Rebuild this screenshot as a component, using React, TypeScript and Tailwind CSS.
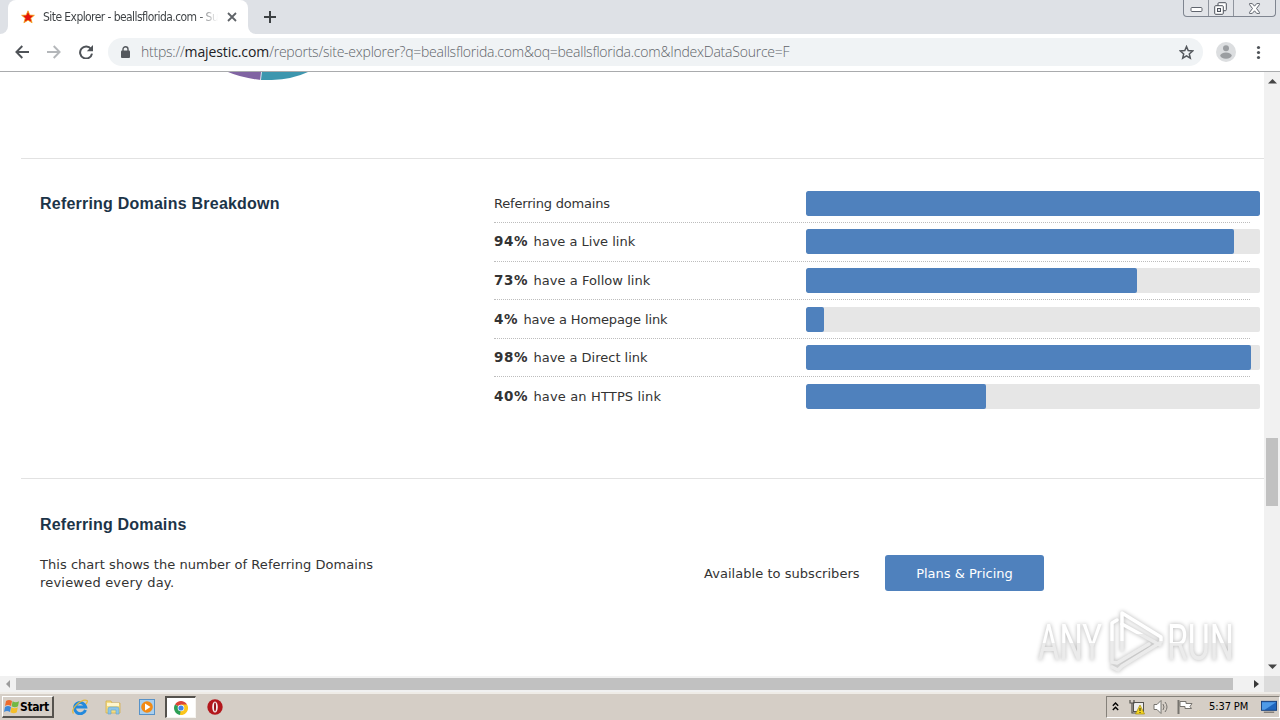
import React from "react";

interface DomainRow {
  percent?: string;
  label: string;
  fill: number;
  tracking?: string;
}

const rows: DomainRow[] = [
  { label: "Referring domains", fill: 454, tracking: "tracking-[-0.2px]" },
  { percent: "94%", label: "have a Live link", fill: 428 },
  { percent: "73%", label: "have a Follow link", fill: 331, tracking: "tracking-[0.05px]" },
  { percent: "4%", label: "have a Homepage link", fill: 18, tracking: "tracking-[-0.1px]" },
  { percent: "98%", label: "have a Direct link", fill: 445 },
  { percent: "40%", label: "have an HTTPS link", fill: 180, tracking: "tracking-[0.15px]" },
];

function TabStrip() {
  return (
    <div className="flex h-[34px] bg-[#dee1e6]">
      <div className="h-2 w-2 self-end bg-white">
        <div className="h-full w-full rounded-br-lg bg-[#dee1e6]" />
      </div>
      <div className="flex h-full w-[240px] items-center rounded-t-lg bg-white pl-[13px]">
        <svg className="h-[14px] w-[14px] shrink-0" viewBox="0 0 14 14">
          <path d="M7 .8l1.800 4.300 4.600.2-3.600 2.900 1.300 4.600L7 10.200l-4.100 2.600 1.300-4.600L.6 5.300l4.600-.2z" fill="#e5140c" stroke="#f4a81c" strokeWidth=".8" />
        </svg>
        <span className="ml-[8px] w-[175px] whitespace-nowrap bg-gradient-to-r from-[#3c4043] from-[88%] to-transparent bg-clip-text font-['DejaVu_Sans_Condensed','DejaVu_Sans',sans-serif] text-[12px] leading-[18px] tracking-[-0.57px] text-transparent">
          Site Explorer - beallsflorida.com - Su
        </span>
        <svg className="ml-[9px] h-[10px] w-[10px]" viewBox="0 0 10 10">
          <path d="M1 1l8 8M9 1L1 9" stroke="#5f6368" strokeWidth="1.8" />
        </svg>
      </div>
      <div className="h-2 w-2 self-end bg-white">
        <div className="h-full w-full rounded-bl-lg bg-[#dee1e6]" />
      </div>
      <svg className="ml-[7px] mt-[10px] h-[14px] w-[14px]" viewBox="0 0 14 14">
        <path d="M7 1v12M1 7h12" stroke="#3c4043" strokeWidth="2" />
      </svg>
      {/* Window controls */}
      <div className="ml-auto mr-[4px] flex h-[17px] rounded-b-[4px] border border-t-0 border-[#7f8590] bg-[#e2e4e8]">
        <div className="flex w-[25px] items-center justify-center border-r border-[#8f949d]">
          <svg className="mt-[3px] h-[5px] w-[13px]" viewBox="0 0 13 5">
            <rect x="1" y=".5" width="11" height="4" rx="1" fill="#fff" stroke="#60656e" />
          </svg>
        </div>
        <div className="flex w-[25px] items-center justify-center border-r border-[#8f949d]">
          <svg className="mr-[2px] h-[13px] w-[13px]" viewBox="0 0 13 13">
            <rect x="4" y=".7" width="8.3" height="8" rx="1" fill="#fff" stroke="#4d525b" />
            <rect x=".7" y="3.7" width="8.6" height="8.6" rx="1" fill="#fff" stroke="#4d525b" />
            <rect x="3.5" y="6.5" width="3" height="3" fill="#e2e4e8" stroke="#4d525b" />
          </svg>
        </div>
        <div className="flex w-[41px] items-center justify-center">
          <svg className="h-[11px] w-[13px]" viewBox="0 0 13 11">
            <path d="M1.5.6h2.8l2.2 2.6L8.7.6h2.8v1L8.5 5.5l3 3.900v1H8.7L6.5 7.8l-2.2 2.6H1.5v-1l3-3.900-3-3.900z" fill="#fff" stroke="#60656e" />
          </svg>
        </div>
      </div>
    </div>
  );
}

function AddressBar() {
  return (
    <div className="flex h-[38px] items-center border-b border-[#a9abad] bg-white pb-px">
      <svg className="ml-[15px] h-[14px] w-[14px]" viewBox="0 0 14 14" fill="none" stroke="#4f5358" strokeWidth="1.9">
        <path d="M14 7H1.5M7.3 1L1.4 7l5.900 6" />
      </svg>
      <svg className="ml-[18px] h-[14px] w-[14px]" viewBox="0 0 14 14" fill="none" stroke="#b4b7ba" strokeWidth="1.9">
        <path d="M0 7h12.5M6.7 1l5.900 6-5.900 6" />
      </svg>
      <svg className="ml-[18px] h-[14px] w-[14px]" viewBox="0 0 14 14">
        <path d="M12 4A6 6 0 1 0 13 8.6" fill="none" stroke="#4f5358" strokeWidth="2" />
        <path d="M14 0v6.2H7.8z" fill="#4f5358" />
      </svg>
      <div className="ml-[15px] flex h-7 w-[1095px] items-center rounded-full bg-[#f0f3f5] pl-[13px] pr-[9px]">
        <svg className="h-[12px] w-[9px]" viewBox="0 0 9 12">
          <path d="M2 5V3.2a2.5 2.5 0 0 1 5 0V5" fill="none" stroke="#54585d" strokeWidth="1.4" />
          <rect x="0" y="4.5" width="9" height="7.5" rx="1" fill="#54585d" />
        </svg>
        <span className="ml-[11px] whitespace-nowrap font-['Open_Sans','Noto_Sans',sans-serif] text-[14px] font-light leading-5 tracking-[-0.23px] text-[#5f6469]">
          https://<span className="font-normal tracking-[-0.1px] text-[#202124]">majestic.com</span>/reports/site-explorer?q=beallsflorida.com&amp;oq=beallsflorida.com&amp;IndexDataSource=F
        </span>
        <svg className="ml-auto h-[15px] w-[15px]" viewBox="0 0 15 15">
          <path d="M7.5 1.6l1.7 4 4.4.4-3.3 2.900 1 4.300-3.800-2.300-3.800 2.300 1-4.300L1.400 6l4.400-.4z" fill="none" stroke="#54585d" strokeWidth="1.5" />
        </svg>
      </div>
      <svg className="ml-[13px] h-5 w-5" viewBox="0 0 20 20">
        <circle cx="10" cy="10" r="10" fill="#dcdee0" />
        <circle cx="10" cy="6.200" r="3" fill="#9b9ea1" />
        <ellipse cx="10" cy="13.600" rx="5.700" ry="3.100" fill="#9b9ea1" />
      </svg>
      <svg className="ml-[16px] h-4 w-4" viewBox="0 0 16 16" fill="#4f5358">
        <circle cx="6.500" cy="3.500" r="1.600" />
        <circle cx="6.500" cy="8.500" r="1.600" />
        <circle cx="6.500" cy="13.500" r="1.600" />
      </svg>
    </div>
  );
}

function BreakdownTable() {
  return (
    <div className="w-[756px] pt-[25.4px]">
      {rows.map((row, i) => (
        <div
          key={row.label}
          className={`grid h-[38.6px] grid-cols-[312px_454px] items-start pt-[6.4px] ${i < rows.length - 1 ? "border-b border-dotted border-[#bdbdbd]" : ""}`}
        >
          <span className={`whitespace-nowrap leading-[25px] ${row.tracking ?? ""}`}>
            {row.percent && <b className="text-[13.5px] leading-[13px] tracking-[0.6px]">{row.percent} </b>}
            {row.label}
          </span>
          <div className="h-[25px] overflow-hidden rounded-[2px] bg-[#e6e6e6]">
            <div className="h-full rounded-[2px] bg-[#4f81bd]" style={{ width: row.fill }} />
          </div>
        </div>
      ))}
    </div>
  );
}

function Watermark() {
  return (
    <svg
      className="absolute left-[1030px] top-[532px] h-[72px] w-[212px] overflow-visible drop-shadow-[0_0_2px_rgba(0,0,0,0.3)]"
      viewBox="0 0 212 72"
      fontFamily="Roboto, sans-serif"
      fontSize="50"
    >
      <defs>
        <linearGradient id="fade" x1="0" y1="0" x2="0" y2="1">
          <stop offset=".5" stopColor="#ffffff" />
          <stop offset=".5" stopColor="#ebebeb" />
        </linearGradient>
      </defs>
      <g fill="url(#fade)">
        <text x="8" y="56" textLength="64" lengthAdjust="spacingAndGlyphs">ANY</text>
        <text x="137" y="56" textLength="67" lengthAdjust="spacingAndGlyphs">RUN</text>
      </g>
      <g fill="none" stroke="url(#fade)" strokeWidth="3.500" strokeLinejoin="round" strokeLinecap="round">
        <path d="M92 46V9l39 24v5L92 62l-4 4-6-3" />
        <path d="M92 20l38 21" />
        <path d="M87 16l-5 3v39l5 1 32-19" />
      </g>
    </svg>
  );
}

function VerticalScrollbar() {
  return (
    <div className="flex w-4 flex-col items-center bg-[#f1f1f1]">
      <svg className="mt-[7px] h-[5px] w-[9px]" viewBox="0 0 9 5"><path d="M0 4.500L4.500 0 9 4.500z" fill="#454545" /></svg>
      <div className="mt-[354px] h-[68px] w-[12px] bg-[#c1c1c1]" />
      <svg className="mb-[7px] mt-auto h-[5px] w-[9px]" viewBox="0 0 9 5"><path d="M0 .5L4.500 5 9 .5z" fill="#454545" /></svg>
    </div>
  );
}

function Page() {
  return (
    <div className="relative flex h-[604px] bg-white">
      <main className="w-[1264px] overflow-hidden text-[13px] text-[#333333]">
        <div className="h-[86px] pl-[228px]">
          <svg className="h-[8px] w-[80px]" viewBox="0 0 80 8">
            <path d="M0 0h33v8Q14 6 0 0z" fill="#8064a2" />
            <path d="M33 0h47Q61 9 33 8z" fill="#3d96ae" />
            <path d="M33.500 0l-1 8" stroke="#fff" strokeWidth=".8" />
          </svg>
        </div>
        <section className="ml-[21px] flex h-[320px] border-t border-[#e2e2e2] pl-[19px]">
          <h2 className="w-[454px] pt-[35px] font-['Liberation_Sans',Arial,sans-serif] text-[16px] font-bold leading-[20px] tracking-[0.22px] text-[#1c3448]">
            Referring Domains Breakdown
          </h2>
          <BreakdownTable />
        </section>
        <section className="ml-[21px] flex border-t border-[#e2e2e2] pl-[19px]">
          <div className="w-[664px] pt-[36px]">
            <h2 className="font-['Liberation_Sans',Arial,sans-serif] text-[16px] font-bold leading-[20px] tracking-[0.2px] text-[#1c3448]">
              Referring Domains
            </h2>
            <p className="mt-[21px] whitespace-nowrap leading-[18px] tracking-[0.04px]">
              This chart shows the number of Referring Domains
              <br />
              <span className="tracking-[0.2px]">reviewed every day.</span>
            </p>
          </div>
          <div className="mt-[76px] flex h-[36px] items-center">
            <span className="w-[181px] whitespace-nowrap pt-px tracking-[0.04px]">Available to subscribers</span>
            <button className="h-[36px] w-[159px] rounded-[3px] bg-[#4f81bd] pt-px text-center text-white">
              Plans &amp; Pricing
            </button>
          </div>
        </section>
      </main>
      <VerticalScrollbar />
      <Watermark />
    </div>
  );
}

function HorizontalScrollbar() {
  return (
    <div className="flex h-4 items-center bg-[#f1f1f1]">
      <svg className="ml-[6px] h-[8px] w-[4px]" viewBox="0 0 4 8"><path d="M4 0v8L0 4z" fill="#9c9c9c" /></svg>
      <div className="ml-[6px] h-[12px] w-[1217px] bg-[#c1c1c1]" />
      <svg className="ml-[21px] h-[8px] w-[5px]" viewBox="0 0 5 8"><path d="M0 0v8l5-4z" fill="#383838" /></svg>
      <div className="ml-auto h-full w-4 bg-[#dcdcdc]" />
    </div>
  );
}

function Taskbar() {
  return (
    <footer className="flex h-[28px] items-center border-t-2 border-[#efece7] bg-[#d5cec6]">
      <button className="ml-[2px] flex h-[22px] w-[52px] items-center border border-b-2 border-r-2 border-[#fff] border-b-[#56534e] border-r-[#56534e] bg-[#d5cec6] pl-px">
        <svg className="h-[15px] w-[16px] shrink-0" viewBox="0 0 16 15">
          <path d="M2 2q3-2 6 0L7 7Q4 5 1 7z" fill="#ed6b2d" />
          <path d="M8.600 2.300q3 2 6.400 0L14 7.300q-3 2-6.400 0z" fill="#72b844" />
          <path d="M1 8q3-2 6 0l-1 5q-3-2-6 0z" fill="#3e88d8" />
          <path d="M7.400 8.300q3 2 6.400 0l-1 5q-3 2-6.400 0z" fill="#f4be29" />
        </svg>
        <span className="font-['DejaVu_Sans_Condensed','DejaVu_Sans',sans-serif] text-[12px] font-bold leading-4 tracking-[-0.4px] text-black">Start</span>
      </button>
      <svg className="ml-[18px] h-[16px] w-[16px]" viewBox="0 0 16 16">
        <path d="M13.500 11A5.600 5.600 0 1 1 13.700 8H3.500" fill="none" stroke="#2389dc" strokeWidth="3" />
        <path d="M1.500 14.500C-2 10 10-1 15 1.500q1 .8-1 3.500" fill="none" stroke="#e4b93c" strokeWidth="1.300" />
      </svg>
      <svg className="ml-[17px] h-[16px] w-[17px]" viewBox="0 0 17 16">
        <path d="M1 2h5l1 2h8v10H1z" fill="#f4dc82" stroke="#d4b04d" strokeWidth=".8" />
        <path d="M2 4h12v3H2z" fill="#fff6cc" />
        <path d="M3 15v-5q0-2 2-2h7q2 0 2 2v5h-3v-4H6v4z" fill="#8cc5e8" stroke="#63a4c9" strokeWidth=".6" />
      </svg>
      <svg className="ml-[17px] h-[16px] w-[16px]" viewBox="0 0 16 16">
        <rect x=".5" y=".5" width="15" height="15" fill="#a9cfee" stroke="#5792c8" />
        <circle cx="8" cy="8" r="5.800" fill="#f28a14" />
        <path d="M6 4.500v7L11.500 8z" fill="#fff" />
      </svg>
      <div className="ml-[10px] flex h-[22px] w-[31px] items-center justify-center border border-l-2 border-t-2 border-[#f6f4f0] border-l-[#55524d] border-t-[#55524d] bg-white">
        <svg className="h-[14px] w-[14px]" viewBox="0 0 14 14">
          <path d="M7 7L1 3.500A7 7 0 0 1 13 3.500z" fill="#dc4437" />
          <path d="M7 7L1 3.500A7 7 0 0 0 6 14l3.500-5z" fill="#2d9f55" />
          <path d="M7 7l-1 7A7 7 0 0 0 13 3.500H7z" fill="#fbc51b" />
          <circle cx="7" cy="7" r="3.300" fill="#fff" />
          <circle cx="7" cy="7" r="2.600" fill="#4285e8" />
        </svg>
      </div>
      <svg className="ml-[11px] h-[16px] w-[16px]" viewBox="0 0 16 16">
        <ellipse cx="8" cy="8" rx="7.700" ry="7.700" fill="#b3171c" />
        <ellipse cx="8" cy="8" rx="2.800" ry="5.600" fill="#f5eeee" />
        <ellipse cx="8" cy="8" rx="1" ry="4.400" fill="#961015" />
      </svg>
      {/* Tray */}
      <div className="ml-auto flex h-[22px] w-[174px] items-center border border-[#85817a] border-b-[#fff] border-r-[#fff] pl-[5px]">
        <svg className="mb-[2px] h-[9px] w-[7px]" viewBox="0 0 7 9" fill="none" stroke="#000" strokeWidth="1.400">
          <path d="M.8 3.700L3.500 1l2.700 2.700M.8 8l2.700-2.700L6.200 8" />
        </svg>
        <svg className="ml-[10px] h-[16px] w-[16px]" viewBox="0 0 16 16">
          <rect x="4.500" y="3.500" width="10" height="9" fill="#eee" stroke="#55534f" />
          <path d="M1 1v3h4V1M3 4v10h4" fill="none" stroke="#55534f" strokeWidth="1.200" />
          <path d="M11 6l4.500 9h-9z" fill="#f5d520" stroke="#a48a10" strokeWidth=".7" />
          <path d="M11 9v3M11 13v1" stroke="#222" />
        </svg>
        <svg className="ml-[8px] h-[16px] w-[17px]" viewBox="0 0 17 16" stroke="#77746f">
          <path d="M1 5.500h3L8 1.500v13l-4-4H1z" fill="#fff" />
          <path d="M10 5q2 3 0 6M12 3q4 5 0 10" fill="none" />
        </svg>
        <svg className="ml-[7px] h-[16px] w-[16px]" viewBox="0 0 16 16">
          <path d="M1.500 1v14" stroke="#77746f" strokeWidth="2" />
          <path d="M3 2.500h6v2h6l-2 3 1.500 2H8v-2H3z" fill="#fff" stroke="#77746f" />
        </svg>
        <span className="ml-[16px] whitespace-nowrap font-['DejaVu_Sans_Condensed','DejaVu_Sans',sans-serif] text-[11px] leading-4 tracking-[-0.1px] text-black">5:37 PM</span>
        <svg className="ml-auto mr-[2px] h-[14px] w-[16px]" viewBox="0 0 17 14">
          <rect x=".5" y="1" width="16" height="9.500" fill="#1f65bd" stroke="#153f7c" />
          <path d="M1 2h15L4 10H1z" fill="#4f9be8" />
          <path d="M3 12.500h11" stroke="#55534f" />
        </svg>
      </div>
    </footer>
  );
}

export default function App() {
  return (
    <div className="h-[720px] w-[1280px] overflow-hidden bg-white font-['DejaVu_Sans',Verdana,sans-serif]">
      <TabStrip />
      <AddressBar />
      <Page />
      <HorizontalScrollbar />
      <Taskbar />
    </div>
  );
}
